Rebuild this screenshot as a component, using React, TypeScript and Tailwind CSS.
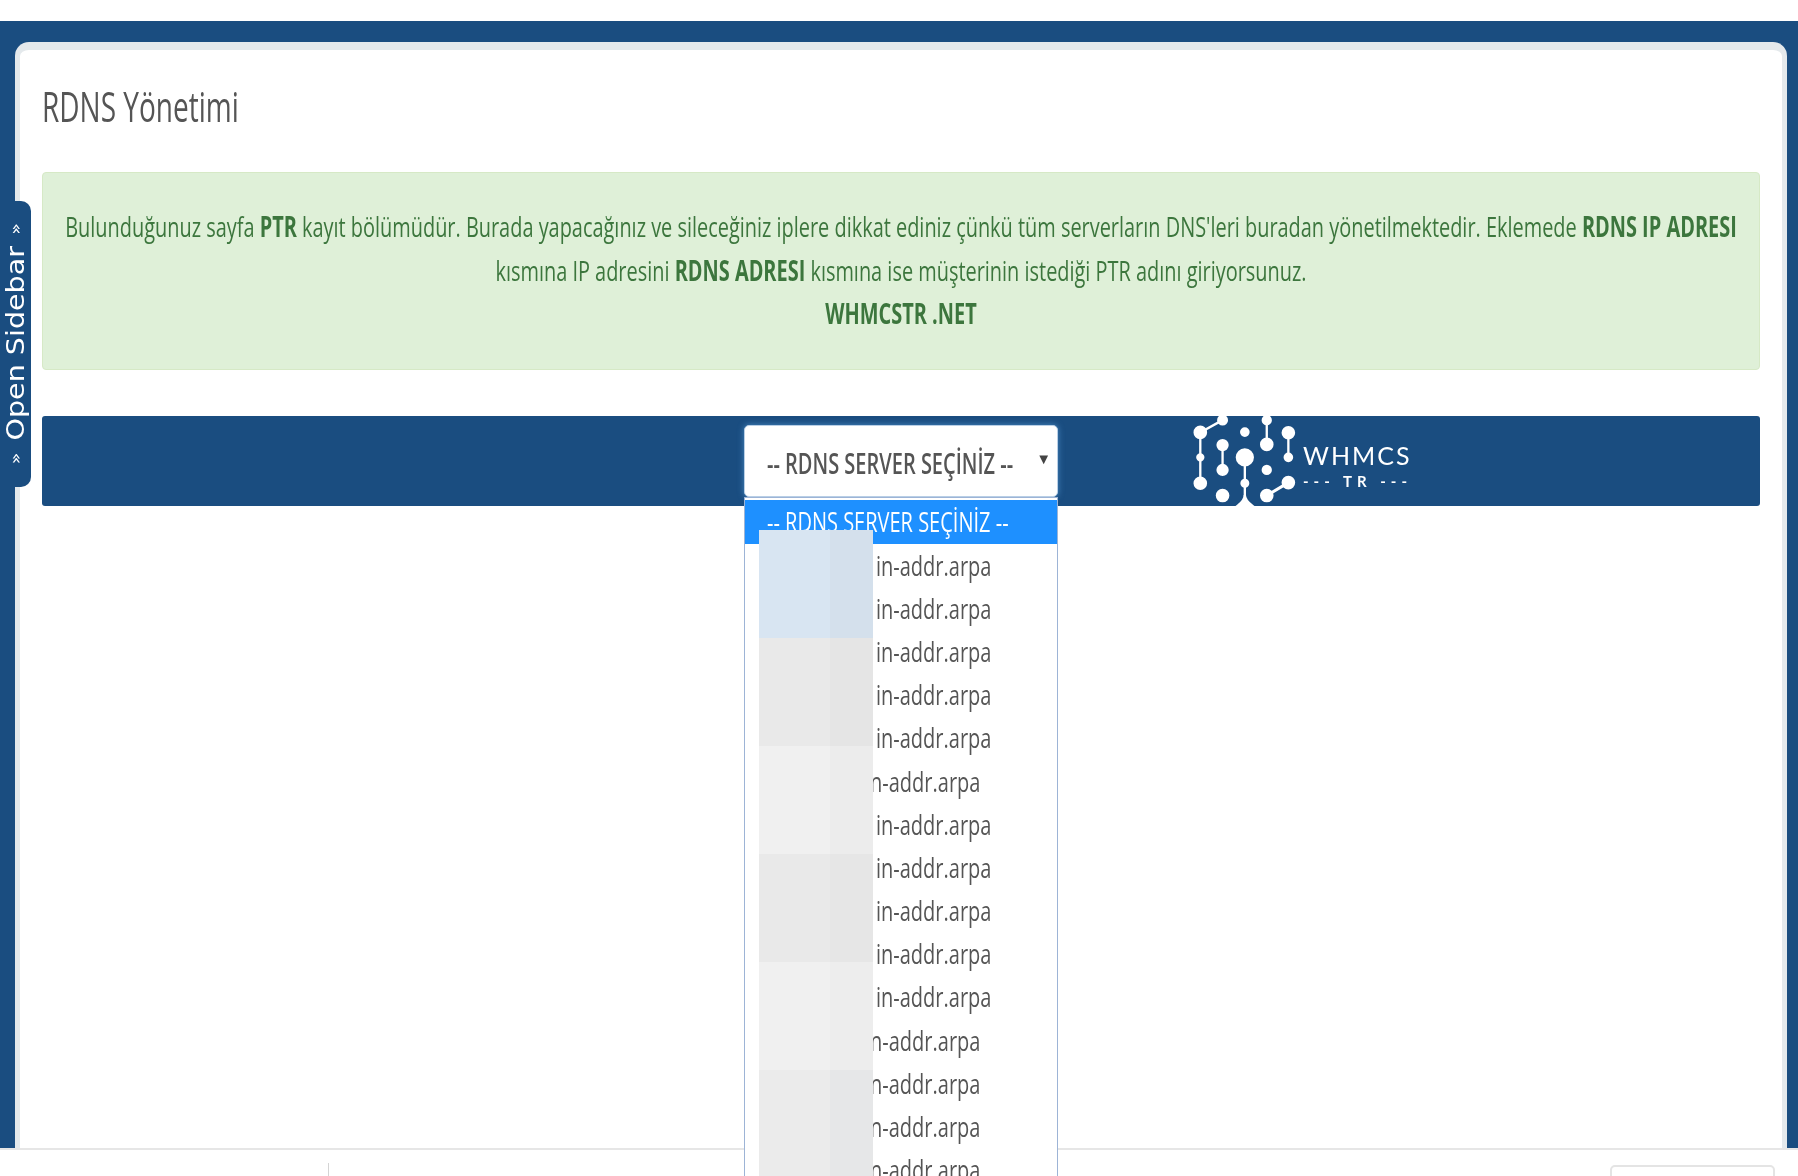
const OPTIONS = [
  "in", "in", "in", "in", "in", "n", "in", "in", "in", "in", "in", "n", "n", "n", "n",
];

const MASK_BANDS = [
  { id: 1, left: "bg-[#d8e5f2]", right: "bg-[#d4e0ec]" },
  { id: 2, left: "bg-[#e9e9e9]", right: "bg-[#e5e5e5]" },
  { id: 3, left: "bg-[#f0f0f0]", right: "bg-[#ececec]" },
  { id: 4, left: "bg-[#e9e9e9]", right: "bg-[#e6e6e6]" },
  { id: 5, left: "bg-[#f0f0f0]", right: "bg-[#ededed]" },
  { id: 6, left: "bg-[#ebebeb]", right: "bg-[#e6e7e8]" },
];

function WhmcsMark() {
  return (
    <svg width="108" height="90" viewBox="60 48 325 270" fill="#fff" stroke="#fff" strokeWidth="7" strokeLinecap="round">
      <path d="M155 60 L88 97 L88 250" fill="none" />
      <circle cx="155" cy="60" r="13" />
      <circle cx="88" cy="97" r="17" />
      <circle cx="88" cy="172" r="9" />
      <circle cx="88" cy="250" r="17" />
      <circle cx="222" cy="96" r="11" />
      <path d="M155 135 L155 210" fill="none" />
      <circle cx="155" cy="135" r="15" />
      <circle cx="155" cy="210" r="15" />
      <path d="M288 60 L288 133" fill="none" />
      <circle cx="288" cy="60" r="12" />
      <circle cx="288" cy="133" r="17" />
      <path d="M353 98 L353 172" fill="none" />
      <circle cx="353" cy="98" r="17" />
      <circle cx="353" cy="172" r="11" />
      <circle cx="222" cy="172" r="24" />
      <path d="M222 190 L222 290" fill="none" />
      <circle cx="222" cy="250" r="10" />
      <path d="M222 285 C222 300 210 310 200 318 L245 318 C235 310 222 300 222 285 Z" />
      <circle cx="288" cy="210" r="12" />
      <circle cx="155" cy="287" r="17" />
      <path d="M353 248 L288 287" fill="none" strokeWidth="9" />
      <circle cx="353" cy="248" r="17" />
      <circle cx="288" cy="287" r="17" />
    </svg>
  );
}

function ServerDropdown() {
  return (
    <div className="absolute left-0 top-[81px] w-[314px] h-[700px] overflow-hidden bg-white border border-[#9db4d6] font-['Open_Sans',sans-serif] text-[20px] text-[#555]">
      <div className="h-[44px] mt-[2px] pl-[22px] flex items-center bg-[#1e90ff] text-white">
        <span className="inline-block scale-y-[1.4]">-- RDNS SERVER SEÇİNİZ --</span>
      </div>
      {OPTIONS.map((prefix, i) => (
        <div key={i} className={prefix === "in" ? "h-[43.2px] flex items-center pl-[131px]" : "h-[43.2px] flex items-center pl-[120px]"}>
          <span className="inline-block scale-y-[1.4]">in-addr.arpa</span>
        </div>
      ))}
      <div className="absolute left-[14px] top-[32px] w-[114px] flex flex-col">
        {MASK_BANDS.map((band) => (
          <div key={band.id} className="h-[108px] flex">
            <div className={`w-[71px] ${band.left}`} />
            <div className={`flex-1 ${band.right}`} />
          </div>
        ))}
      </div>
    </div>
  );
}

export default function App() {
  return (
    <div className="relative w-full h-[1176px] overflow-hidden bg-white pt-[21px] flex flex-col font-['Open_Sans',sans-serif] blur-[0.5px]">
      <div className="flex-1 min-h-0 bg-[#1a4d80] pt-[21px] pl-[15px] pr-[11px] flex">
        <div className="flex-1 bg-white border-t-[8px] border-x-[5px] border-[#e4e9ec] rounded-t-[14px] px-[22px]">
          <h1 className="mt-[39px] h-[32px] leading-[32px] text-[28px] text-[#555] scale-y-[1.5] origin-center">RDNS Yönetimi</h1>
          <div className="mt-[51px] h-[198px] flex items-center justify-center bg-[#dff0d8] border border-[#d6e9c6] rounded-[4px]">
            <p className="mt-[1px] text-center text-[19.93px] leading-[30.8px] text-[#3c763d] scale-y-[1.4] px-[18px]">
              Bulunduğunuz sayfa <b>PTR</b> kayıt bölümüdür. Burada yapacağınız ve sileceğiniz iplere dikkat ediniz çünkü tüm serverların DNS'leri buradan yönetilmektedir. Eklemede <b>RDNS IP ADRESI</b> kısmına IP adresini <b>RDNS ADRESI</b> kısmına ise müşterinin istediği PTR adını giriyorsunuz.
              <br />
              <b>WHMCSTR .NET</b>
            </p>
          </div>
          <div className="mt-[46px] h-[90px] bg-[#1a4d80] rounded-[3px] grid grid-cols-[1fr_314px_1fr]">
            <div />
            <div className="relative pt-[9px]">
              <div className="h-[72px] bg-white rounded-[5px] border border-[#b9cfe6] shadow-[0_0_6px_rgba(102,175,233,0.6)] flex items-center pl-[22px] pt-[6px] relative text-[20px] font-semibold text-[#555]">
                <span className="inline-block scale-y-[1.4]">-- RDNS SERVER SEÇİNİZ --</span>
                <span className="absolute right-[6px] top-[21px] text-[15px] text-[#444]">▼</span>
              </div>
              <ServerDropdown />
            </div>
            <div className="pl-[133px] flex">
              <WhmcsMark />
              <div className="ml-[4px] flex flex-col items-start text-white">
                <span className="mt-[26px] font-['Lato',sans-serif] font-normal text-[25px] leading-[26px] tracking-[2px]">WHMCS</span>
                <span className="mt-[4px] font-['Lato',sans-serif] font-bold text-[15px] leading-[18px] tracking-[5px] whitespace-nowrap">--- TR ---</span>
              </div>
            </div>
          </div>
        </div>
      </div>
      <div className="h-[28px] shrink-0 bg-white border-t-2 border-[#e6e6e6] flex justify-between">
        <div className="ml-[328px] mt-[13px] w-px h-[20px] bg-[#d4d4d4]" />
        <div className="mr-[23px] mt-[15px] w-[165px] h-[30px] border-2 border-[#e4e4e4] rounded-[5px]" />
      </div>
      <div className="absolute left-0 top-[201px] w-[31px] h-[286px] bg-[#1a4d80] rounded-r-[10px] flex items-center justify-center">
        <span className="[writing-mode:vertical-rl] rotate-180 scale-y-[1.19] font-['DejaVu_Sans',sans-serif] text-[24px] leading-[24px] text-white whitespace-nowrap flex gap-[10px] items-center">
          <span className="text-[16px]">»</span>
          <span>Open Sidebar</span>
          <span className="text-[16px]">»</span>
        </span>
      </div>
    </div>
  );
}
